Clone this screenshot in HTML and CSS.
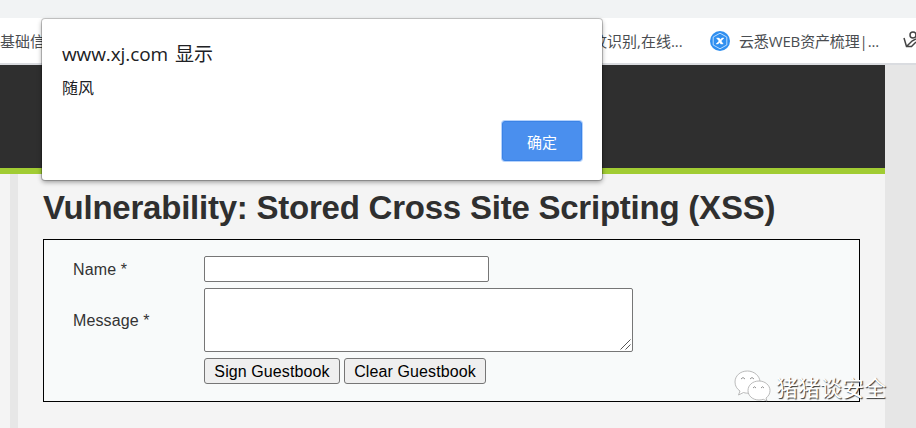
FILE: index.html
```html
<!DOCTYPE html>
<html lang="zh">
<head>
<meta charset="utf-8">
<title>Vulnerability: Stored Cross Site Scripting (XSS)</title>
<link rel="stylesheet" href="styles.css">
</head>
<body>
<div class="toolbar"></div>
<nav class="bookmarks">
  <span class="bm bm-first">基础信息</span>
  <span class="bm bm-second">指纹识别,在线...</span>
  <svg class="bm-icon" width="20" height="20" viewBox="0 0 20 20"><circle cx="10" cy="10" r="10" fill="#2f8ff0"/><path d="M10 2.200 16.800 6v8L10 17.800 3.200 14V6z" fill="none" stroke="#b9dcff" stroke-width="1"/><path d="M6.500 7h2.600l1.200 1.500L12 7h2l-2.800 3 2 3h-2.500l-1-1.500L8 13H6l3-3z" fill="#fff" stroke="#fff" stroke-width=".4"/></svg>
  <span class="bm bm-third">云悉<span class="latin">WEB</span>资产梳理|...</span>
  <svg class="bm-cut" width="13" height="20" viewBox="0 0 13 20" fill="none" stroke="#444" stroke-width="1.500"><circle cx="10" cy="4" r="3"/><path d="M1 7 3.500 15.500H8.500L13 11M3.500 15.500 9 10 13 8"/></svg>
</nav>
<header class="header"></header>
<div class="page">
  <aside class="side"></aside>
  <main class="content">
    <h1>Vulnerability: Stored Cross Site Scripting (XSS)</h1>
    <form class="guestbook">
      <label for="name">Name *</label>
      <input id="name" type="text">
      <label for="msg">Message *</label>
      <div class="field">
        <textarea id="msg"></textarea>
        <svg class="grip" width="11" height="11" viewBox="0 0 11 11" stroke="#555" fill="none"><path d="M.5 10.500 10.500.5M5.500 10.500 10.500 5.500"/></svg>
      </div>
      <div class="actions">
        <button type="button" class="sign">Sign Guestbook</button>
        <button type="button" class="clear">Clear Guestbook</button>
      </div>
    </form>
  </main>
</div>
<div class="dialog" role="dialog">
  <div class="origin"><span class="host">www.xj.com</span><span>显示</span></div>
  <div class="message">随风</div>
  <button type="button" class="ok">确定</button>
</div>
<div class="watermark">
  <svg width="38" height="34" viewBox="0 0 38 34" fill="#fff" stroke="#aaa" stroke-width=".8">
    <path d="M13.500 1C6 1 1 6 1 12c0 4 2 7 5 9l-1.500 4 5-2.500c2 .7 4 .8 6 .5C23 22 26 17 26 12 26 6 20 1 13.500 1z"/>
    <path d="M25 11c-6.500 0-11 4.300-11 9.500S18.500 30 25 30c1.500 0 3-.3 4.300-.7L33 31l-1-3c2.500-1.800 4-4.300 4-7.500C36 15.300 31 11 25 11z"/>
    <path d="M7 9q2-3 4 0M16 9q2-3 4 0M19 18q1.500-2.500 3 0M27 18q1.500-2.500 3 0" fill="none" stroke="#777"/>
  </svg>
  <span>猪猪谈安全</span>
</div>
</body>
</html>
```
FILE: styles.css
```css
* { box-sizing: border-box; }
body {
  margin: 0;
  width: 916px;
  height: 428px;
  overflow: hidden;
  position: relative;
  display: flex;
  flex-direction: column;
  background: #e6e6e6;
  font-family: "Liberation Sans", "Noto Sans CJK SC", sans-serif;
}
.toolbar { height: 18px; background: #f1f3f4; }
.bookmarks {
  height: 47px;
  display: flex;
  align-items: center;
  background: #fff;
  border-bottom: 2px solid #dadce0;
  color: #4a4d51;
  font: 400 15px/20px "Open Sans", "Noto Sans CJK SC", sans-serif;
  white-space: nowrap;
}
.bm-first { width: 577px; }
.bm-second { width: 133px; }
.bm-third { width: 155px; margin-left: 9px; letter-spacing: -.15px; }
.bm-cut { margin-left: 9px; flex: none; }
.bm-icon { flex: none; }
.header {
  width: 885px;
  height: 109px;
  background: #2f2f2f;
  border-bottom: 6px solid #a1cc33;
}
.page { display: flex; width: 885px; flex: 1; background: #f4f4f4; }
.side { width: 18px; border-right: 8px solid #e7e7e7; }
.content { flex: 1; padding: 14px 25px 0; }
h1 {
  margin: 0 0 11px;
  color: #2f2f2f;
  font-size: 33px;
  letter-spacing: -.23px;
  line-height: 40px;
  white-space: nowrap;
}
.guestbook {
  width: 817px;
  height: 163px;
  padding: 16px 29px;
  border: 1px solid #000;
  background: #f8fafa;
  display: grid;
  grid-template-columns: 131px 1fr;
  grid-template-rows: 26px 64px 26px;
  row-gap: 6px;
  align-items: center;
  color: #333;
  font-size: 16px;
}
.guestbook label { padding-top: 2px; letter-spacing: .12px; }
.guestbook input, .guestbook textarea {
  margin: 0;
  border: 1px solid #767676;
  border-radius: 2px;
  background: #fff;
}
.guestbook input { width: 285px; height: 26px; }
.field { position: relative; width: 429px; }
.guestbook textarea { width: 429px; height: 64px; display: block; resize: none; }
.grip { position: absolute; right: 2px; bottom: 2px; }
.actions { grid-column: 2; display: flex; gap: 4px; }
.actions button {
  height: 26px;
  padding: 1px 0 0;
  border: 1px solid #767676;
  border-radius: 3px;
  background: #efefef;
  color: #000;
  font: 16px "Liberation Sans", sans-serif;
  letter-spacing: .1px;
}
.actions .sign { width: 136px; }
.actions .clear { width: 142px; }
.dialog {
  position: absolute;
  left: 42px;
  top: 19px;
  width: 560px;
  height: 161px;
  padding: 22px 20px;
  display: flex;
  flex-direction: column;
  background: #fff;
  border-radius: 3px;
  box-shadow: 0 0 0 1px rgba(0,0,0,.2), 0 2px 5px rgba(0,0,0,.4);
  color: #202124;
  font-family: "Open Sans", "Noto Sans CJK SC", sans-serif;
}
.origin { display: flex; gap: 6px; font: 400 19px/26px "Open Sans", "Noto Sans CJK SC", sans-serif; }
.host { width: 107px; letter-spacing: -.1px; }
.message { margin-top: 9px; font-size: 16px; line-height: 24px; }
.ok {
  align-self: flex-end;
  margin-top: 21px;
  width: 80px;
  height: 40px;
  flex: none;
  padding: 0;
  border: 1px solid #3b83e6;
  border-radius: 3px;
  background: #4a8fee;
  box-shadow: 0 0 0 1px #b5d2fb;
  color: #fff;
  font: 400 15px "Noto Sans CJK SC", sans-serif;
}
.watermark {
  position: absolute;
  left: 734px;
  top: 370px;
  display: flex;
  gap: 4px;
  color: #fff;
  font: 400 22px/32px "Noto Sans CJK SC", sans-serif;
  text-shadow: 1px 1px 1px #333;
  white-space: nowrap;
}
```
